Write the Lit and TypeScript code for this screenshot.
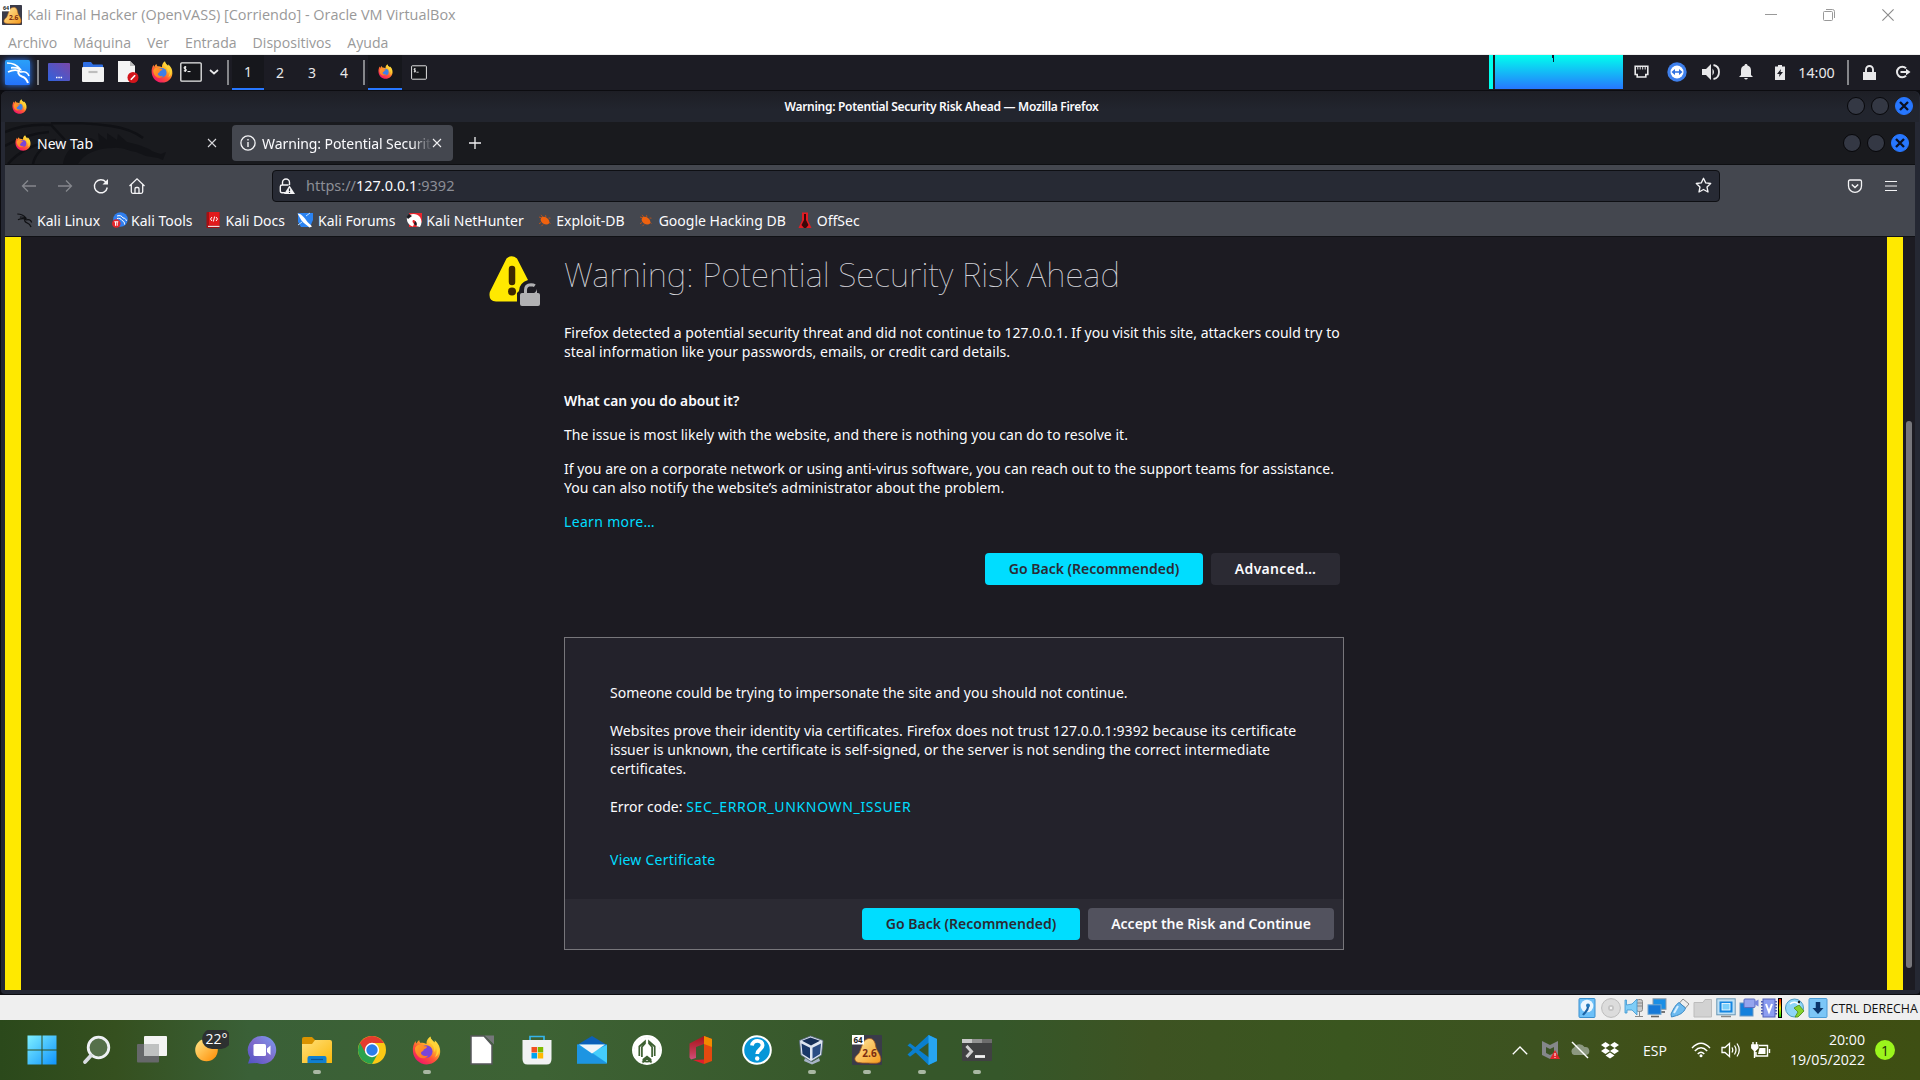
import { LitElement, html, css, svg, TemplateResult } from "lit";
import { customElement } from "lit/decorators.js";

const firefox = (size: number, core = "#3f7fe8") => html`<svg width=${size} height=${size} viewBox="0 0 24 24">
  <defs>
    <linearGradient id="fxb" x1="0.85" y1="0.05" x2="0.2" y2="0.95"><stop offset="0" stop-color="#fff04a"/><stop offset=".35" stop-color="#ffb228"/><stop offset=".62" stop-color="#ff5636"/><stop offset="1" stop-color="#f0126c"/></linearGradient>
    <linearGradient id="fxt" x1="0" y1="0" x2="1" y2="1"><stop offset="0" stop-color="#ffa428"/><stop offset="1" stop-color="#ff6a25"/></linearGradient>
  </defs>
  <path fill="url(#fxb)" d="M.8 13C.3 9.400 1.400 6.200 2.900 4.100c.1 1 .4 1.700.8 2.200C4.300 4.800 5 4 6 3.300c0 1 .4 1.800 1.100 2.400 1.500-.2 3.300.3 4.900 1C11.800 4.200 13 1.700 15.300.4c.2 2.400 1.800 3.300 3.400 4.900.2-.6.200-1.200.100-1.800C21.800 6 23.600 9.500 23.300 13.500 22.900 19.200 18.200 23.500 12.200 23.500 6.300 23.500 1.400 19 .8 13z"/>
  <circle cx="11.800" cy="12.800" r="5.200" fill=${core}/>
  <path fill="url(#fxt)" d="M2.600 9.800C4 7.300 6.400 6.600 8.600 8.100c1.300.4 3 .2 3.900.7-.3 1.500-2 1.700-2.800 2.400.2 1.600-2.200 1.400-2.300 3.100.7 2.200 3.300 2.900 5.800 1.800-.8 2.100-4.400 3.300-7.200 1.400C3.700 15.900 2 12.500 2.600 9.800z"/>
  <path fill="#ffd338" d="M14.300 5.200c2.600 1.500 4.500 4.300 4.200 8 1.300-1.400 1.300-3.200 1-4.300 1.600 2.800 1.200 6.300-.6 8.600 2.800-1.500 4.200-5 3.300-8.200-.6-1.700-1.800-3.300-3.500-3.600-1.500-1.400-3-2.400-3.400-4.700-1 1.200-1.300 2.700-1 4.200z"/>
</svg>`;

const dragonLines = svg`
  <path d="M2 3C8 3 12 5 15 9c-3-1-6-1.500-9-1.200M3 12c4-2 9-3 13 0 4-1 7 1 8 4" fill="none" stroke-width="1.700"/>
  <path d="M15 9c-3 3-2 6 2 7.500 4 1.200 5 3.500 6 6.500" fill="none" stroke-width="2"/>`;

const kaliLogo = html`<svg class="glow" width="25" height="25" viewBox="0 0 25 25">
  <defs><linearGradient id="kl" x1="0" y1="0" x2="0" y2="1"><stop offset="0" stop-color="#2aa0f8"/><stop offset="1" stop-color="#2472fb"/></linearGradient></defs>
  <rect width="25" height="25" rx="1.500" fill="url(#kl)"/><g stroke="#fff">${dragonLines}</g></svg>`;

const dragon = (c: string) => html`<svg width="17" height="17" viewBox="0 0 26 26"><g stroke=${c}>${dragonLines}</g></svg>`;

const terminal = (w: number, h: number) => html`<svg width=${w} height=${h} viewBox="0 0 22 20">
  <rect x=".8" y=".8" width="20.400" height="18.400" rx="1" fill="#15161a" stroke="#ececec" stroke-width="1.300"/>
  <path d="M6.300 5H4.200v1.500l2 .8v1.500H3.800M5.200 4v6M7.500 9.600h3" fill="none" stroke="#fff" stroke-width="1"/></svg>`;

const cross = (s: number, c: string, w = 1.2) => html`<svg width=${s} height=${s} viewBox="0 0 10 10"><path d="M1 1l8 8M9 1L1 9" stroke=${c} stroke-width=${w} fill="none"/></svg>`;

const vmIcon = (s: number) => html`<svg width=${s} height=${s} viewBox="0 0 30 30">
  <defs><linearGradient id="vmg" x1="0" y1="0" x2="1" y2="1"><stop offset="0" stop-color="#ffe9a0"/><stop offset="1" stop-color="#f59a1c"/></linearGradient></defs>
  <rect width="30" height="30" rx="1" fill="#3a3b49"/>
  <path d="M11 8c2-5 9-6 11-2 2 3 1 5 3 9 3 5 5 9 3 12-2 2-9 1-13 1-6 0-11 0-12-3-1-4 4-5 5-9 1-3 2-5 3-8z" fill="url(#vmg)" stroke="#a5591e" stroke-width=".8"/>
  <rect width="12" height="9.500" fill="#fff"/><text x="6" y="7.600" text-anchor="middle" font-family="Open Sans" font-weight="700" font-size="8" fill="#222">64</text>
  <text x="17.500" y="22.300" text-anchor="middle" font-family="Open Sans" font-weight="700" font-size="10" fill="#7b2c10">2.6</text></svg>`;

const bug = html`<svg width="13" height="13" viewBox="0 0 13 13"><path d="M1 3l3 1M3 .8l2 2.500M7.500 1.200l.5 2M10.500 4l2 .2M10.500 8l2 1.500M3 8.500l-2 1.200M5 10.500l-1.500 1.700" stroke="#b5521c" stroke-width="1"/><ellipse cx="7" cy="6.700" rx="4.800" ry="3.400" transform="rotate(35 7 6.700)" fill="#f0620f"/></svg>`;

/* icon, label, width of the icon slot */
const bookmarks: [TemplateResult, string, number][] = [
  [dragon("#101114"), "Kali Linux", 17],
  [html`<svg width="16" height="16" viewBox="0 0 16 16"><circle cx="8.500" cy="7.500" r="7.300" fill="#2f7ff0"/><path d="M5 4c3-1 5 0 6 2 2 0 3 1 3.500 3M5 6.500c2-.5 4 0 5 2 2 .5 2.500 2 2.500 4" stroke="#fff" fill="none"/><circle cx="4.300" cy="11.500" r="4.300" fill="#e3262b"/><path d="M2.300 9.800h4M3.500 9.800v4M5.200 9.800v4" stroke="#fff" stroke-width="1"/></svg>`, "Kali Tools", 15],
  [html`<svg width="14" height="16" viewBox="0 0 14 16"><rect x=".5" width="13" height="16" rx="1" fill="#a50f12"/><rect x="3" width="10.500" height="13.500" fill="#e01a1c"/><rect x="2" y="13.800" width="11.500" height="1.200" fill="#f3d9d9"/><path d="M6 5L4.500 7 6 9M10 5l1.500 2L10 9M8.600 4.500L7.400 9.500" stroke="#fff" fill="none"/></svg>`, "Kali Docs", 17],
  [html`<svg width="17" height="16" viewBox="0 0 17 16"><path d="M1 1h15v7l-3 7H4L1 10z" fill="#2b83f2"/><path d="M.5 1.500C4 1.500 7 5 9 8s4 4 6 6.500l-2.500 1C10 13 6 11 4.500 8.500S2 4 .5 1.500z" fill="#fff"/><path d="M1 13l4-3M9 4l4-3" stroke="#bfe0ff"/></svg>`, "Kali Forums", 17],
  [html`<svg width="17" height="16" viewBox="0 0 17 16"><path d="M3 1h13v9l-5 5H3z" fill="#e8262e"/><path d="M1 5c3-4 10-4 13 0 2 3 2 7 0 10l-4-1c1-3 0-5-2-6-2 0-2 2 0 4l-1 2.500C3 14 0 9 1 5z" fill="#fff"/><path d="M3 2l3 2-4 3-1.500-2z" fill="#1c1c22"/><path d="M9 9c2 1 2 3 1.500 5L8 12z" fill="#1c1c22"/></svg>`, "Kali NetHunter", 15],
  [bug, "Exploit-DB", 16.5],
  [bug, "Google Hacking DB", 18],
  [html`<svg width="14" height="17" viewBox="0 0 14 17"><path d="M4 .5h6v8l3.500 7.500H.5L4 8.500z" fill="#e31b23"/><path d="M6 2h2v6l2.500 5L8 16H6l-2.500-3L6 8z" fill="#3a070a"/></svg>`, "OffSec", 15],
];

const taskIcons: [TemplateResult, boolean][] = [
  [html`<svg width="30" height="30" viewBox="0 0 30 30"><defs><linearGradient id="wn" x1="0" y1="0" x2="1" y2="1"><stop offset="0" stop-color="#7ff0ff"/><stop offset="1" stop-color="#0f93fb"/></linearGradient></defs><path fill="url(#wn)" d="M.5.5h14v14H.5zM15.500.5h14v14h-14zM.5 15.500h14v14H.5zM15.500 15.500h14v14h-14z"/></svg>`, false],
  [html`<svg width="30" height="30" viewBox="0 0 30 30"><circle cx="16.500" cy="12.500" r="10.300" fill="#55704a" stroke="#eef1f4" stroke-width="2.800"/><path d="M9 20.500L3 27" stroke="#d9dde2" stroke-width="3.800" stroke-linecap="round"/></svg>`, false],
  [html`<svg width="32" height="30" viewBox="0 0 32 30"><rect x="1" y="9" width="22" height="18.500" rx="1" fill="#66686a"/><rect x="8" y="1" width="23" height="20" rx="1" fill="#f4f4f4"/><path d="M8 9h15v12H8z" fill="#bfc1c1"/></svg>`, false],
  [html`<svg width="44" height="40" viewBox="0 0 44 40"><defs><linearGradient id="wt" x1="0" y1="0" x2="1" y2="1"><stop offset="0" stop-color="#ffe88a"/><stop offset="1" stop-color="#ff8a00"/></linearGradient></defs><circle cx="21.500" cy="20" r="11.300" fill="url(#wt)"/><rect x="17" y="-1" width="29" height="20" rx="10" fill="#2d3030"/><text x="31.500" y="14" text-anchor="middle" font-family="Open Sans" font-size="14" fill="#fff">22°</text></svg>`, false],
  [html`<svg width="30" height="30" viewBox="0 0 30 30"><defs><linearGradient id="ch" x1="1" y1="0" x2="0" y2="1"><stop offset="0" stop-color="#7a9cf0"/><stop offset=".5" stop-color="#7f6ccd"/><stop offset="1" stop-color="#4f52c4"/></linearGradient></defs><path d="M15 1a14 14 0 1 1-5 27L1 28.500l2-6A14 14 0 0 1 15 1z" fill="url(#ch)"/><rect x="6.500" y="9" width="12.500" height="12" rx="1.500" fill="#fff"/><path d="M20 13.500l3.500-3v9.500l-3.500-3z" fill="#fff"/></svg>`, false],
  [html`<svg width="30" height="30" viewBox="0 0 30 30"><defs><linearGradient id="ex" x1="0" y1="0" x2="1" y2="1"><stop offset="0" stop-color="#ffe07a"/><stop offset="1" stop-color="#fbb80a"/></linearGradient></defs><path d="M0 4q0-2 2-2h8l3 3v5H0z" fill="#d99300"/><path d="M0 9h10l3-4h15q2 0 2 2v21H0z" fill="url(#ex)"/><path d="M5.500 28v-5q0-2 2-2h15q2 0 2 2v5z" fill="#1080d0"/><path d="M9 24.500h12" stroke="#0a5598" stroke-width="1.200"/></svg>`, true],
  [html`<svg width="30" height="30" viewBox="0 0 30 30"><circle cx="15" cy="15" r="14" fill="#fbc914"/><path d="M15 15L2.900 8A14 14 0 0 0 15 29l6-10.400z" fill="#2ba24c"/><path d="M2.900 8A14 14 0 0 1 27.100 8H15L8.900 18.500z" fill="#e33b2e"/><circle cx="15" cy="15" r="7.200" fill="#fff"/><circle cx="15" cy="15" r="5.700" fill="#2b7de9"/></svg>`, false],
  [firefox(29, "#7a45d8"), true],
  [html`<svg width="30" height="30" viewBox="0 0 30 30"><path d="M4 1h13l8 9v19H4z" fill="#fff" stroke="#55575a" stroke-width="1.500"/><path d="M17.500.5H27v9z" fill="#75777a"/></svg>`, false],
  [html`<svg width="30" height="30" viewBox="0 0 30 30"><path d="M8 6V1.500h14V6" fill="none" stroke="#35b5ea" stroke-width="1.700"/><path d="M.5 5h29v19q0 5.500-5 5.500h-19q-5 0-5-5.500z" fill="#f1f2f3"/><path fill="#f25022" d="M9.500 12H15v5.500H9.500z"/><path fill="#7fba00" d="M15.700 12h5.500v5.500h-5.500z"/><path fill="#00a4ef" d="M9.500 18H15v5.500H9.500z"/><path fill="#ffb900" d="M15.700 18h5.500v5.500h-5.500z"/></svg>`, false],
  [html`<svg width="30" height="30" viewBox="0 0 30 30"><path d="M0 10l15-9 15 9z" fill="#0c60b8"/><path d="M0 9.500h30V28.500H0z" fill="#1ea0ea"/><path d="M30 10v18L14 17z" fill="#44cdfb"/><path d="M0 10v18.500h30L14 18z" fill="#1d95e2"/><path d="M2 9.500h26L15 18.500z" fill="#f1f5f8"/></svg>`, false],
  [html`<svg width="30" height="30" viewBox="0 0 30 30"><circle cx="15" cy="15" r="13.700" fill="none" stroke="#fff" stroke-width="2.600"/><path d="M2 15A13 13 0 0 1 28 15c0 5-3 9-6 11H8c-3-2-6-6-6-11z" fill="#fff"/><path d="M7.300 21v-9.500L13 6.500v2L9.900 12v10M22.700 21v-9.500L17 6.500v2l3.100 3.500v10" fill="none" stroke="#3d6032" stroke-width="1.700"/><path d="M10.500 28.500v-4.500L15 20.500l4.500 3.500v4.500L15 25z" fill="#3d6032"/></svg>`, false],
  [html`<svg width="30" height="30" viewBox="0 0 30 30"><defs><linearGradient id="of" x1="0" y1="0" x2="0" y2="1"><stop offset="0" stop-color="#a8131b"/><stop offset=".7" stop-color="#c43a55"/><stop offset="1" stop-color="#d0507e"/></linearGradient></defs><path d="M17 1l8 3v22l-8 3z" fill="#e4490f"/><path d="M17 1l8 3v8l-8-3z" fill="#f28a00"/><path d="M17 1v8l-8 3v11l-5 1.500-1.500-2V8.500z" fill="url(#of)"/><path d="M6 25l11-.5V29z" fill="#e01f2d"/></svg>`, false],
  [html`<svg width="30" height="30" viewBox="0 0 30 30"><circle cx="15" cy="15" r="13.800" fill="#0696d8" stroke="#fff" stroke-width="2"/><path d="M10 10.500c.5-6.500 11-6 10.500 0-.3 4-5.300 4-5.300 8.500" fill="none" stroke="#fff" stroke-width="3.800"/><circle cx="15.200" cy="23.500" r="2.200" fill="#fff"/></svg>`, false],
  [html`<svg width="30" height="30" viewBox="0 0 30 30"><path d="M8 23l7 4 7-4 1 3-8 3.500L7 26z" fill="#a7b4c8"/><path d="M13.500 1L26 5.500 24.500 20 14 26.500 4 20 2.500 5.500z" fill="#dfe6f0" stroke="#5a6b85" stroke-width=".8"/><path d="M13.500 2.500l9.500 3.300-9 4.700-9-4.700z" fill="#173058"/><path d="M4.500 8.500l8.500 4.300v11L5.500 19z" fill="#1a3868"/><path d="M24 8.500l-8.500 4.300v11l7.500-4.800z" fill="#2b4d83"/></svg>`, true],
  [vmIcon(30), true],
  [html`<svg width="30" height="30" viewBox="0 0 30 30"><path d="M21.500 0L30 4v22l-8.500 4L3.500 12.500l-3-2 2.500-2.300L22 22.500V7.500L3 21.800.500 19.500z" fill="#0a7fcf"/><path d="M21.500 0L30 4v22l-8.500 4z" fill="#27a5f2"/></svg>`, true],
  [html`<svg width="30" height="30" viewBox="0 0 30 30"><rect y="4" width="30" height="22" rx="1" fill="#404142"/><path d="M0 4h10v4H0z" fill="#c9c9c9"/><path d="M10 4h10v4H10z" fill="#929292"/><path d="M20 4h10v4H20z" fill="#6c6c6c"/><path d="M4.500 11l5 5.500-5 5.500" fill="none" stroke="#d0d0d0" stroke-width="3"/><path d="M13 21.500h10" stroke="#f2f2f2" stroke-width="2.800"/></svg>`, true],
];

const sq = (body: unknown) => html`<svg width="20" height="20" viewBox="0 0 20 20">${body}</svg>`;
const blueBox = svg`<rect x="1" y=".5" width="18" height="19" rx="1" fill="#7cc6f7" stroke="#4a9bd6"/>`;
const statusIcons: TemplateResult[] = [
  sq(svg`<rect x="2" y=".5" width="16" height="19" rx="1" fill="#6cc0f8" stroke="#3a8fce"/><circle cx="10" cy="8" r="6.300" fill="#eaf6ff"/><circle cx="11" cy="7.500" r="2" fill="#2277bb"/><path d="M11 9c0 4-3 5-5 8" stroke="#1c63a5" stroke-width="2.200" fill="none"/>`),
  sq(svg`<circle cx="10" cy="10" r="9.400" fill="#dcdcdc" stroke="#bcbcbc"/><circle cx="10" cy="10" r="3" fill="#c4c4c4"/><circle cx="10" cy="10" r="1.200" fill="#f4f4f4"/>`),
  sq(svg`<rect x="12.500" y="1.500" width="6" height="12" rx="2" fill="#c9c9c9" stroke="#888"/><path d="M13 5h5M13 8h5M15.500 14v4M11 18.500h8" stroke="#888"/><path d="M1 2h1.500v5L8 6l5-5v16L8 12H3v3H1z" fill="#7fcdf7" stroke="#3d95cf" stroke-width=".8"/>`),
  sq(svg`<rect x="6" y=".8" width="13" height="10.500" fill="#1a8fe6" stroke="#8e9aa5"/><path d="M14 14h4" stroke="#777" stroke-width="2"/><rect x="1" y="6.800" width="13" height="9.500" fill="#1679d8" stroke="#75a8cf"/><path d="M4 18.500h8" stroke="#666" stroke-width="1.600"/>`),
  sq(svg`<path d="M13 1l6 5-3.500 4-6-5z" fill="#eee" stroke="#8a8a8a"/><path d="M9 4.500l6.500 5.500C14 15 9 17 5 18l-3.500 1L1 16C3 12 5 7 9 4.500z" fill="#6cbaf0" stroke="#3a88c4"/><path d="M8 8l-4 7" stroke="#d7efff" stroke-width="2"/>`),
  sq(svg`<path d="M1 4.500h9l2-3h6.500v17.500H1z" fill="#d2d2d2" stroke="#bcbcbc"/>`),
  sq(svg`<rect x=".8" y=".8" width="18.400" height="16" fill="#bfe0f5" stroke="#6a96b5"/><rect x="3.500" y="3.500" width="13" height="11" fill="#1486e2"/><rect x="6" y="5.500" width="8" height="6.500" fill="#7cd0fb" stroke="#fff" stroke-width=".8"/><path d="M5 18.500h10" stroke="#888" stroke-width="1.500"/>`),
  sq(svg`<rect x="1" y="5" width="13" height="13" fill="#1480dc" stroke="#6898c4"/><rect x="5" y="1" width="11" height="8.500" rx="1" fill="#95a4ee" stroke="#5c6cc0"/><path d="M16 3.500l3.500-2v7l-3.500-2z" fill="#7785dd"/>`),
  html`<svg width="16" height="20" viewBox="2 0 16 20"><rect x="4" y="1" width="12" height="18" fill="#8b9cf0" stroke="#5260ba"/><path d="M3 3v15M17 3v15" stroke="#5260ba" stroke-width="2" stroke-dasharray="1.500 1.500"/><path d="M7 6l3 8 3-8" stroke="#fff" stroke-width="2" fill="none"/></svg>`,
  html`<svg width="4" height="20" viewBox="0 0 4 20"><defs><linearGradient id="ld" x1="0" y1="0" x2="0" y2="1"><stop offset="0" stop-color="#f00"/><stop offset=".5" stop-color="#ee0"/><stop offset="1" stop-color="#0c0"/></linearGradient></defs><rect x=".5" y=".5" width="3" height="19" fill="url(#ld)" stroke="#000"/></svg>`,
  sq(svg`<circle cx="9.500" cy="10" r="9" fill="#8fd5f7" stroke="#4c9ac4"/><path d="M5 6c3-3 7-2 9 1" stroke="#fff" stroke-width="1.500" fill="none"/><path d="M9 10l5-3 5 6-6 6h-3l3-5z" fill="#86d22e" stroke="#4c8c14" stroke-width=".8"/><circle cx="14" cy="4" r="1.200" fill="#222"/>`),
  sq(svg`${blueBox}<path d="M10 4v8" stroke="#0b356b" stroke-width="4.500"/><path d="M4.500 10h11L10 16z" fill="#0b356b"/>`),
];

@customElement("app-root")
export class AppRoot extends LitElement {
  static styles = css`
    :host { display: block; width: 1920px; height: 1080px; overflow: hidden; font: 14px/19px "Noto Sans", "Open Sans", sans-serif; color: #fbfbfe; }
    * { box-sizing: border-box; }
    svg { display: block; flex: none; }
    span { white-space: nowrap; }
    .screen { display: flex; flex-direction: column; height: 1080px; }
    .win { font-family: "Open Sans", "Noto Sans", sans-serif; }
    .host { height: 55px; background: #fff; border-bottom: 1px solid #efefef; color: #999; display: flex; flex-direction: column; }
    .caption { height: 29px; display: flex; align-items: center; padding: 0 25px 0 2px; }
    .caption .name { font-size: 14.450px; margin-left: 5px; flex: 1; }
    .caption .ctl { display: flex; gap: 46px; align-items: center; }
    .menus { display: flex; gap: 16px; padding: 4px 8px 0; font-size: 14.100px; }
    .panel { height: 36px; background: #1c1c24; border-bottom: 1px solid #0c0c10; display: grid; align-items: center; justify-items: center;
      grid-template-columns: 34px 8px 34px 34px 37px 29px 29px 18px 9px 32px 32px 32px 32px 8px 34px 34px 1fr 4px 2px 134px 24px 48px 20px 50px 18px 55px 8px 34px 34px; color: #e8e8ea; }
    .panel > svg { margin-bottom: 1px; }
    .glow { filter: drop-shadow(0 0 3px #2a7bff); }
    .sep { width: 2px; height: 25px; background: #85868a; }
    .act { width: 100%; height: 35px; background: #16171c; border-bottom: 2px solid #2777ff; display: flex; align-items: center; justify-content: center; }
    .load { width: 128px; height: 34px; align-self: start; justify-self: start; background: linear-gradient(#0fe, #2777ff); }
    .load.solid { width: 4px; background: #0fe; }
    .clock { font-size: 14.300px; }
    .guest { flex: 1; background: #0c0c10; padding: 0 0 1px 1px; display: flex; }
    .frame { flex: 1; background: #252833; border-radius: 6px 6px 4px 4px; padding: 0 5px 4px 4px; display: flex; flex-direction: column; }
    .wtitle { height: 31px; display: grid; grid-template-columns: 1fr auto 1fr; align-items: center; margin: 0 -4px; padding: 0 5px 1px 11px; background: linear-gradient(#1d1e25, #22252e 60%); border-radius: 6px 6px 0 0; }
    .wtitle b { font-size: 12px; font-weight: 600; letter-spacing: -0.290px; margin: 0 38px 0 -5px; }
    .dots { display: flex; gap: 6px; justify-self: end; margin-right: 1px; }
    .dot { width: 18px; height: 18px; border-radius: 50%; background: #343844; border: 1px solid #07070a; display: flex; align-items: center; justify-content: center; }
    .dot.x { background: #2777ff; border-color: #2777ff; }
    .tabs { height: 43px; background: #191a1e; border-bottom: 1px solid #0e0f12; display: flex; align-items: center; position: relative; padding-right: 6px; }
    .mark { position: absolute; left: 0; top: 0; }
    .tab { position: relative; display: flex; align-items: center; height: 36px; border-radius: 4px; }
    .tab span { padding-top: 1px; }
    .tab.one { width: 220px; padding: 0 8px 0 10px; margin-right: 7px; }
    .tab.one span { margin-left: 6px; flex: 1; }
    .tab.two { width: 221px; background: #44474f; padding: 0 11px 0 8px; }
    .tab.two span { margin-left: 6px; width: 170px; letter-spacing: -0.080px; -webkit-mask-image: linear-gradient(90deg, #000 88%, transparent); mask-image: linear-gradient(90deg, #000 88%, transparent); }
    .plus { margin-left: 16px; flex: 1; }
    .tabs .dots { margin-right: 0; }
    .nav { height: 43px; background: #44474f; display: flex; align-items: center; }
    .nav .l { width: 267px; display: flex; padding-left: 15px; gap: 18px; margin-top: -2px; }
    .url { width: 1448px; height: 32px; margin-top: -2px; background: #272a34; border: 1px solid #0e0f13; border-radius: 4px; display: flex; align-items: center; padding: 0 7px 0 6px; color: #8c8e96; }
    .url span { margin-left: 11px; flex: 1; font-size: 14.500px; }
    .url em { font-style: normal; color: #fbfbfe; }
    .nav .r { display: flex; gap: 20px; margin: -2px 0 0 127px; }
    .marks { height: 29px; background: #44474f; border-bottom: 1px solid #101115; display: flex; align-items: center; padding: 0 0 4px 11px; gap: 12px; }
    .bm { display: flex; align-items: center; gap: 4px; }
    .ico { display: flex; justify-content: center; }
    .page { flex: 1; background: #1c1b22; border: solid #ffe900; border-width: 0 16px; margin-right: 12px; display: flex; }
    .view { flex: 1; display: flex; background: #1c1b22; }
    .rail { width: 12px; margin-left: -12px; padding: 184px 3px 22px; display: flex; background: #1c1b22; }
    .rail i { flex: 1; border-radius: 3px; background: #77767b; }
    .warn { margin: 19px 0 0 468px; }
    .body { width: 780px; margin-left: 24px; padding-top: 14px; }
    .body p, .body h1, .body h2 { margin: 0 0 15px; white-space: nowrap; font-size: 14.030px; font-weight: 400; }
    .body h1 { font-size: 33.300px; line-height: 47px; font-weight: 100; margin: 0 0 25px; color: #d4d4da; }
    .body h2 { font-weight: 600; font-size: 13.830px; margin-top: 30px; }
    .s2 { letter-spacing: 0.025px; }
    .s5 { letter-spacing: 0.045px; }
    .s7 { letter-spacing: 0.068px; }
    .s25 { letter-spacing: 0.240px; }
    .s33 { letter-spacing: 0.330px; }
    .s66 { letter-spacing: 0.650px; }
    a { color: #00ddff; }
    .btns { display: flex; justify-content: flex-end; gap: 8px; }
    .btn { height: 32px; border-radius: 4px; font-weight: 600; display: flex; align-items: center; justify-content: center; background: #2b2a33; color: #fbfbfe; padding-bottom: 1px; }
    .go { width: 218px; background: #00ddff; color: #2b2a33; }
    .adv { width: 129px; letter-spacing: 0.300px; }
    .acc { width: 246px; background: #52525e; }
    .top { margin: 22px 4px 52px 0; }
    .cert { height: 313px; border: 1px solid #77767b; background: #23222b; display: flex; flex-direction: column; }
    .cert .txt { flex: 1; padding: 45px 0 0 45px; }
    .cert .txt p { margin-bottom: 19px; }
    .cert .txt p.code { margin-bottom: 34px; }
    .cert .btns { height: 50px; background: #2b2a33; align-items: center; padding-right: 9px; }
    .cert .acc { background: #52525e; }
    .status { height: 25px; background: #efefef; display: grid; justify-content: end; justify-items: center; align-items: center; padding-top: 1px; color: #111;
      grid-template-columns: 23.500px 23.500px 23px 23px 23px 23px 23px 23px 17px 5px 25px 21px 91.500px; }
    .status span { font-size: 12.380px; }
    .task { height: 60px; display: flex; padding-left: 14px; background: linear-gradient(90deg, #2b491b 0, #35501f 6%, #3a6037 13%, #3d6234 28%, #37572a 45%, #35572a 52%, #3d5322 60%, #3a561f 70%, #3d5220 80%, #424e12 91%, #3e4f13 100%); }
    .cell { width: 55px; display: flex; flex-direction: column; align-items: center; }
    .pic { height: 50px; display: flex; align-items: center; padding-top: 10px; }
    .cell i { width: 8px; height: 4px; border-radius: 2px; background: #a9b8a3; }
    .tray { margin-left: auto; display: grid; grid-template-columns: 30px 30px 30px 29px 62px 30px 30px 30px 89px 55px; align-items: center; justify-items: center; }
    .date { text-align: right; line-height: 20px; font-size: 14.150px; justify-self: end; padding-bottom: 1px; }
    .one-b { width: 20px; height: 20px; border-radius: 50%; background: #9bf51c; color: #1b2a08; display: flex; align-items: center; justify-content: center; margin-right: 15px; }
  `;

  private dots() {
    return html`<div class="dots"><div class="dot"></div><div class="dot"></div><div class="dot x">${cross(10, "#0b1020", 2.3)}</div></div>`;
  }

  private hostBar() {
    return html`<header class="host win">
      <div class="caption">${vmIcon(20)}<span class="name">Kali Final Hacker (OpenVASS) [Corriendo] - Oracle VM VirtualBox</span>
        <div class="ctl">
          <svg width="12" height="12" viewBox="0 0 12 12"><path d="M0 5.500h12" stroke="#999"/></svg>
          <svg width="12" height="12" viewBox="0 0 12 12" fill="none" stroke="#999"><rect x=".5" y="2.500" width="9" height="9" rx="1"/><path d="M3 .5h6.500q2 0 2 2V9"/></svg>
          ${cross(14, "#8a8a8a", 0.8)}
        </div></div>
      <nav class="menus">${["Archivo", "Máquina", "Ver", "Entrada", "Dispositivos", "Ayuda"].map(m => html`<span>${m}</span>`)}</nav>
    </header>`;
  }

  private panel() {
    return html`<div class="panel">
      ${kaliLogo}<div class="sep"></div>
      <svg width="22" height="18" viewBox="0 0 22 18"><defs><linearGradient id="dk" x1="0" y1="1" x2="1" y2="0"><stop offset="0" stop-color="#2f62dd"/><stop offset="1" stop-color="#7a47a8"/></linearGradient></defs><rect width="22" height="18" rx="1" fill="url(#dk)"/><path d="M8 14.500h1.500M10.300 14.500h1.500M12.600 14.500h1.500" stroke="#fff" stroke-width="1.500"/></svg>
      <svg width="22" height="20" viewBox="0 0 22 20"><path d="M1 1q0-1 1-1h7l2 2.500h9q1 0 1 1V7H1z" fill="#2f6fe4"/><path d="M0 6q0-1 1-1h20q1 0 1 1v13q0 1-1 1H1q-1 0-1-1z" fill="#f2f2f2"/><path d="M6.500 10h9" stroke="#bdbdbd" stroke-width="2.200"/></svg>
      <svg width="21" height="22" viewBox="0 0 21 22"><path d="M0 0h12l5 5v16H0z" fill="#f4f4f4"/><path d="M12 0l5 5h-5z" fill="#bbb"/><circle cx="15" cy="16.500" r="5.500" fill="#d3151b"/><path d="M12.800 18.800l4.300-4.600" stroke="#fff" stroke-width="1.600"/></svg>
      ${firefox(22)} ${terminal(22, 20)}
      <svg width="10" height="6" viewBox="0 0 10 6"><path d="M1 1l4 3.500L9 1" fill="none" stroke="#e8e8ea" stroke-width="1.700"/></svg>
      <div class="sep"></div><div class="act">1</div><span>2</span><span>3</span><span>4</span><div class="sep"></div>
      <div class="act">${firefox(15)}</div>${terminal(16, 15)}<div></div>
      <div class="load solid"></div><div></div>
      <div class="load"><svg width="128" height="34"><path d="M57 0h2v7h-1V3h-1z" fill="#0c1c33"/></svg></div>
      <svg width="15" height="14" viewBox="0 0 15 14"><path d="M1.200 1.200h12.600v8.300h-2v2.500h-8.600V9.500h-2z" fill="none" stroke="#e8e8ea" stroke-width="1.600"/><path d="M3.800 2v2.500M6.200 2v2.500M8.700 2v2.500M11.200 2v2.500" stroke="#e8e8ea"/></svg>
      <svg width="20" height="20" viewBox="0 0 20 20"><circle cx="10" cy="10" r="9.700" fill="#3f80ec"/><circle cx="10" cy="10" r="6.500" fill="#fff"/><path d="M4.500 10L8 7v2.200h4V7l3.500 3L12 13v-2.200H8V13z" fill="#2f70e0"/></svg>
      <svg width="18" height="16" viewBox="0 0 18 16"><path d="M0 5h4l5-5v16l-5-5H0z" fill="#e8e8ea"/><path d="M10.500 4.500q3 3.500 0 7z" fill="#e8e8ea"/><path d="M11.500 1q5.500 1 5.500 7t-5.500 7" fill="none" stroke="#e8e8ea" stroke-width="1.800"/></svg>
      <svg width="14" height="16" viewBox="0 0 14 16"><path d="M7 0c1 0 1.500.6 1.500 1.500 2.500.6 3.500 2.500 3.500 5V11l2 2H0l2-2V6.500C2 4 3 2.100 5.500 1.500 5.500.6 6 0 7 0zM5 14h4q-2 3-4 0z" fill="#e8e8ea"/></svg>
      <svg width="10" height="15" viewBox="0 0 10 15"><path d="M3 0h4v1.500h3V15H0V1.500h3z" fill="#e8e8ea"/><path d="M6 4L2 9h2.500L4 12l4-5H5.500z" fill="#1c1c24"/></svg>
      <span class="clock">14:00</span><div class="sep"></div>
      <svg width="13" height="15" viewBox="0 0 13 15"><path d="M0 7h13v8H0z" fill="#e8e8ea"/><path d="M3 7.500V4.500a3.500 3.500 0 0 1 7 0v3" fill="none" stroke="#e8e8ea" stroke-width="1.900"/></svg>
      <svg width="16" height="14" viewBox="0 0 16 14"><path d="M11 3.200A5.300 5.300 0 1 0 11 10.800" fill="none" stroke="#e8e8ea" stroke-width="2"/><path d="M5.500 7h7" stroke="#e8e8ea" stroke-width="2"/><path d="M11 3.800L15.500 7 11 10.200z" fill="#e8e8ea"/></svg>
    </div>`;
  }

  private chrome() {
    return html`
      <div class="wtitle"><div>${firefox(15)}</div><b>Warning: Potential Security Risk Ahead — Mozilla Firefox</b>${this.dots()}</div>
      <div class="tabs">
        <svg class="mark" width="170" height="42" viewBox="0 0 170 42"><g fill="none" stroke="#101115" stroke-width="2.500"><path d="M0 10C14 4 30 2 46 3L60 18M0 24c14-8 28-13 44-14M3 42c10-12 24-20 48-24M28 42c2-10 10-18 22-24M46 1c26 0 40 0 60 3 14 2 24 6 32 12"/></g><path d="M58 42c2-12 10-22 28-26l8 4-1-9 9 7 0-7 10 7 1-6 9 8 12 3 10 4c4 3 8 4 12 5l5-2-3 8-5-2-12-2-10-4c-8-1-14-5-22-4-18 0-30 6-36 16z" fill="#121317"/></svg>
        <div class="tab one">${firefox(16, "#7a45d8")}<span>New Tab</span>${cross(10, "#d8d8dc", 1.1)}</div>
        <div class="tab two"><svg width="16" height="16" viewBox="0 0 16 16"><circle cx="8" cy="8" r="7.100" fill="none" stroke="#f4f4f6" stroke-width="1.300"/><path d="M8 7v5M8 4v1.500" stroke="#f4f4f6" stroke-width="1.400"/></svg><span>Warning: Potential Securit</span>${cross(10, "#f0f0f2", 1.1)}</div>
        <svg class="plus" width="12" height="12" viewBox="0 0 12 12" preserveAspectRatio="xMinYMid meet"><path d="M6 0v12M0 6h12" stroke="#f0f0f2" stroke-width="1.300"/></svg>
        ${this.dots()}
      </div>
      <div class="nav">
        <div class="l">
          <svg width="18" height="18" viewBox="0 0 18 18" fill="none" stroke="#85878d" stroke-width="1.300"><path d="M16 9H3M8 3.500L2.500 9 8 14.500"/></svg>
          <svg width="18" height="18" viewBox="0 0 18 18" fill="none" stroke="#85878d" stroke-width="1.300"><path d="M2 9h13M10 3.500L15.500 9 10 14.500"/></svg>
          <svg width="18" height="18" viewBox="0 0 18 18" fill="none" stroke="#f4f4f6" stroke-width="1.400"><path d="M15.300 10.500a6.500 6.500 0 1 1-1.500-5.500L15.500 6.700"/><path d="M16 2v5.500h-5.500z" fill="#f4f4f6" stroke="none"/></svg>
          <svg width="18" height="18" viewBox="0 0 18 18" fill="none" stroke="#f4f4f6" stroke-width="1.300"><path d="M1.500 9L9 1.800 16.500 9M3.300 7.500v7.300q0 1.500 1.500 1.500h8.400q1.500 0 1.500-1.500V7.500"/><path d="M7 16v-4.300q0-1.200 1.200-1.200h1.600q1.200 0 1.200 1.200V16"/></svg>
        </div>
        <div class="url">
          <svg width="16" height="16" viewBox="0 0 16 16" fill="none"><path d="M3.500 7V4.500a3.500 3.500 0 0 1 7 0V7M6 14.800H3q-1.700 0-1.700-1.700V8.700Q1.300 7 3 7h6.500" stroke="#f4f4f6" stroke-width="1.400"/><path d="M10.500 7.500L16 16H5z" fill="#f4f4f6"/><path d="M10.500 10.500v2.800M10.500 14v1" stroke="#272a34" stroke-width="1.200"/></svg>
          <span>https://<em>127.0.0.1</em>:9392</span>
          <svg width="17" height="17" viewBox="0 0 17 17"><path d="M8.500 1.300l2.200 4.600 5 .6-3.700 3.500 1 5-4.500-2.500L4 15l1-5L1.300 6.500l5-.6z" fill="none" stroke="#f4f4f6" stroke-width="1.300" stroke-linejoin="round"/></svg>
        </div>
        <div class="r">
          <svg width="16" height="16" viewBox="0 0 16 16" fill="none" stroke="#f4f4f6" stroke-width="1.300"><path d="M3 2h10q1.500 0 1.500 1.500V8a6.500 6.300 0 0 1-13 0V3.500Q1.500 2 3 2z"/><path d="M4.800 6.500L8 9.500l3.200-3" stroke-width="1.500"/></svg>
          <svg width="16" height="16" viewBox="0 0 16 16"><path d="M2 3.500h12M2 8h12M2 12.500h12" stroke="#f4f4f6" stroke-width="1.200"/></svg>
        </div>
      </div>
      <div class="marks">${bookmarks.map(([i, t, w]) => html`<div class="bm"><div class="ico" style="width:${w}px">${i}</div><span>${t}</span></div>`)}</div>`;
  }

  private page() {
    return html`<div class="view"><div class="page">
      <div class="warn"><svg width="51" height="51" viewBox="0 0 51 51"><path d="M17.500 2.500q5-4.500 10.500 0L39 24q-9 3-9 11l-2 2v8.500H7Q-1 45 .8 36z" fill="#ffe900"/><path d="M23 13v13" stroke="#3e2800" stroke-width="6.500" stroke-linecap="round"/><circle cx="23" cy="35.500" r="4" fill="#3e2800"/><rect x="31" y="37" width="20" height="13" rx="2" fill="#b1b1b3"/><path d="M36.500 38v-4q0-5 5.500-5.200 2.500 0 3.800 1" fill="none" stroke="#b1b1b3" stroke-width="3"/><path d="M48 33v5h-5q4-1 5-5z" fill="#b1b1b3"/></svg></div>
      <div class="body">
        <h1>Warning: Potential Security Risk Ahead</h1>
        <p>Firefox detected a potential security threat and did not continue to 127.0.0.1. If you visit this site, attackers could try to<br><span class="s5">steal information like your passwords, emails, or credit card details.</span></p>
        <h2>What can you do about it?</h2>
        <p class="s2">The issue is most likely with the website, and there is nothing you can do to resolve it.</p>
        <p>If you are on a corporate network or using anti-virus software, you can reach out to the support teams for assistance.<br><span class="s7">You can also notify the website’s administrator about the problem.</span></p>
        <p><a class="s33">Learn more…</a></p>
        <div class="btns top"><div class="btn go">Go Back (Recommended)</div><div class="btn adv">Advanced…</div></div>
        <div class="cert"><div class="txt">
          <p>Someone could be trying to impersonate the site and you should not continue.</p>
          <p><span class="s7">Websites prove their identity via certificates. Firefox does not trust 127.0.0.1:9392 because its certificate</span><br><span class="s2">issuer is unknown, the certificate is self-signed, or the server is not sending the correct intermediate</span><br><span class="s7">certificates.</span></p>
          <p class="code">Error code: <a class="s66">SEC_ERROR_UNKNOWN_ISSUER</a></p>
          <p><a class="s25">View Certificate</a></p>
        </div><div class="btns"><div class="btn go">Go Back (Recommended)</div><div class="btn acc">Accept the Risk and Continue</div></div></div>
      </div>
    </div><div class="rail"><i></i></div></div>`;
  }

  private taskbar() {
    return html`<footer class="task win">
      ${taskIcons.map(([i, on]) => html`<div class="cell"><div class="pic">${i}</div>${on ? html`<i></i>` : ""}</div>`)}
      <div class="tray">
        <svg width="16" height="9" viewBox="0 0 16 9"><path d="M.8 8.200L8 1l7.200 7.200" fill="none" stroke="#fff" stroke-width="1.300"/></svg>
        <svg width="19" height="20" viewBox="0 0 19 20"><path d="M1 1l8 4 8-4v14l-8 4-8-4z" fill="#85878a"/><path d="M5 7l4 2 4-2v6l-4 2-4-2z" fill="#3c5325"/><path d="M14 10l5 9H9z" fill="#e0262a"/><path d="M14 13v3M14 17v1" stroke="#fff"/></svg>
        <svg width="20" height="18" viewBox="0 0 20 18"><path d="M4 14a4 4 0 0 1 0-7.500A6 6 0 0 1 14.500 6 4 4 0 0 1 16 14z" fill="#8c9880"/><path d="M2 1l16 16" stroke="#fff" stroke-width="1.500"/></svg>
        <svg width="18" height="17" viewBox="0 0 18 17" fill="#fff"><path d="M4.500 0L9 3 4.500 6 0 3zM13.500 0L18 3l-4.500 3L9 3zM4.500 6L9 9l-4.500 3L0 9zM13.500 6L18 9l-4.500 3L9 9zM9 10.500l4.500 3L9 16.500l-4.500-3z"/></svg>
        <span>ESP</span>
        <svg width="20" height="16" viewBox="0 0 20 16" fill="none" stroke="#fff" stroke-width="1.400"><path d="M1 6q9-9.500 18 0M3.800 9q6.200-6.500 12.400 0M6.700 12q3.300-3.500 6.600 0"/><circle cx="10" cy="13.800" r="1.500" fill="#fff" stroke="none"/></svg>
        <svg width="20" height="18" viewBox="0 0 20 18" fill="none" stroke="#fff" stroke-width="1.300"><path d="M1 6.500h3l4.500-4v13l-4.500-4H1z"/><path d="M11 6.500q1.500 2.500 0 5M13.500 4.500q3 4.500 0 9M16 2.500q4.500 6.500 0 13"/></svg>
        <svg width="20" height="17" viewBox="0 0 20 17" fill="none" stroke="#fff" stroke-width="1.400"><path d="M8 3.500h8.500v10.500H5V10M18.500 7v4M3.500 9v7M2 0v3M5.500 0v3"/><path d="M.8 3h6v3l-3 3-3-3z" fill="#fff"/><path d="M8.500 6h6v6H7z" fill="#fff" stroke="none"/></svg>
        <div class="date">20:00<br>19/05/2022</div><div class="one-b">1</div>
      </div>
    </footer>`;
  }

  render() {
    return html`<div class="screen">
      ${this.hostBar()}${this.panel()}
      <main class="guest"><div class="frame">${this.chrome()}${this.page()}</div></main>
      <div class="status win">${statusIcons}<span>CTRL DERECHA</span></div>
      ${this.taskbar()}
    </div>`;
  }
}
